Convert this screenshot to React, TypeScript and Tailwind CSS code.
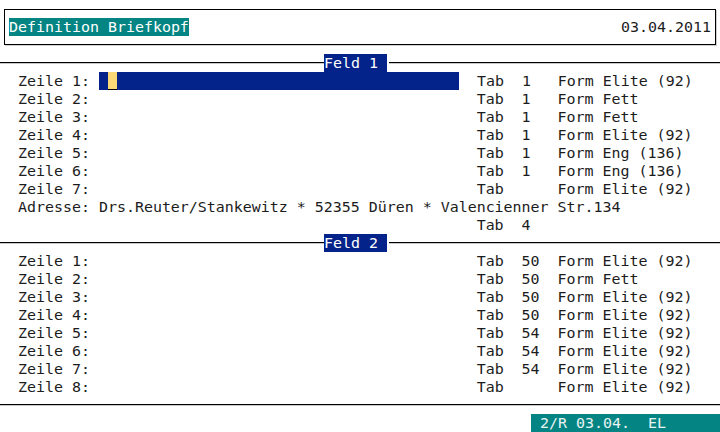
const feld1 = [
  { label: "Zeile 1:", tab: "1", form: "Elite (92)" },
  { label: "Zeile 2:", tab: "1", form: "Fett" },
  { label: "Zeile 3:", tab: "1", form: "Fett" },
  { label: "Zeile 4:", tab: "1", form: "Elite (92)" },
  { label: "Zeile 5:", tab: "1", form: "Eng (136)" },
  { label: "Zeile 6:", tab: "1", form: "Eng (136)" },
  { label: "Zeile 7:", tab: "", form: "Elite (92)" },
];

const feld2 = [
  { label: "Zeile 1:", tab: "50", form: "Elite (92)" },
  { label: "Zeile 2:", tab: "50", form: "Fett" },
  { label: "Zeile 3:", tab: "50", form: "Elite (92)" },
  { label: "Zeile 4:", tab: "50", form: "Elite (92)" },
  { label: "Zeile 5:", tab: "54", form: "Elite (92)" },
  { label: "Zeile 6:", tab: "54", form: "Elite (92)" },
  { label: "Zeile 7:", tab: "54", form: "Elite (92)" },
  { label: "Zeile 8:", tab: "", form: "Elite (92)" },
];

// each text cell is 9px wide, each row 18px tall
function Row({ children }: { children: React.ReactNode }) {
  return <div className="h-[18px] leading-[18px] whitespace-pre">{children}</div>;
}

function FieldRow({ label, tab, form, active }: { label: string; tab: string; form: string; active?: boolean }) {
  return (
    <Row>
      <span>{"  " + label + " "}</span>
      {active ? (
        <span className="inline-flex h-[18px] w-[360px] align-top bg-[#04238a]">
          <span className="ml-[9px] w-[9px] h-[18px] bg-[#fbd877] border-b border-black" />
        </span>
      ) : (
        <span>{" ".repeat(40)}</span>
      )}
      <span>{"  Tab  " + tab.padEnd(4) + "Form " + form}</span>
    </Row>
  );
}

function Divider({ title }: { title?: string }) {
  return (
    <div className="h-[18px] flex items-center">
      <div className="flex-1 h-[2px] border-t border-black border-b border-b-[#c8c8c8] box-border" />
      {title && (
        <>
          <div className="w-[63px] h-[18px] leading-[18px] bg-[#04238a] text-white whitespace-pre">{title}</div>
          <div className="w-[331px] ml-[2px] h-[2px] border-t border-black border-b border-b-[#c8c8c8] box-border" />
        </>
      )}
    </div>
  );
}

export default function App() {
  return (
    <div className="w-[720px] h-[432px] overflow-hidden bg-white text-[#1c1c1c] font-['DejaVu_Sans_Mono',monospace] text-[14.95px]">
      {/* header box */}
      <div className="h-[54px] pt-[9px] pl-[4px]">
        <div className="w-[712px] h-[36px] border border-black pt-[8px] px-[4px] flex justify-between shadow-[1px_1px_0_#d0d0d0]">
          <span className="h-[18px] leading-[18px] bg-[#048482] text-white whitespace-pre">Definition Briefkopf</span>
          <span className="h-[18px] leading-[18px] whitespace-pre">03.04.2011</span>
        </div>
      </div>

      <Divider title="Feld 1" />
      {feld1.map((r, i) => (
        <FieldRow key={i} {...r} active={i === 0} />
      ))}
      <Row>{"  Adresse: Drs.Reuter/Stankewitz * 52355 Düren * Valencienner Str.134"}</Row>
      <Row>{" ".repeat(53) + "Tab  4"}</Row>

      <Divider title="Feld 2" />
      {feld2.map((r, i) => (
        <FieldRow key={i} {...r} />
      ))}

      <Divider />
      <div className="h-[18px] flex justify-end">
        <div className="w-[189px] h-[18px] leading-[18px] bg-[#048482] text-[#e8f4f4] whitespace-pre">{" 2/R 03.04.  EL"}</div>
      </div>
    </div>
  );
}
